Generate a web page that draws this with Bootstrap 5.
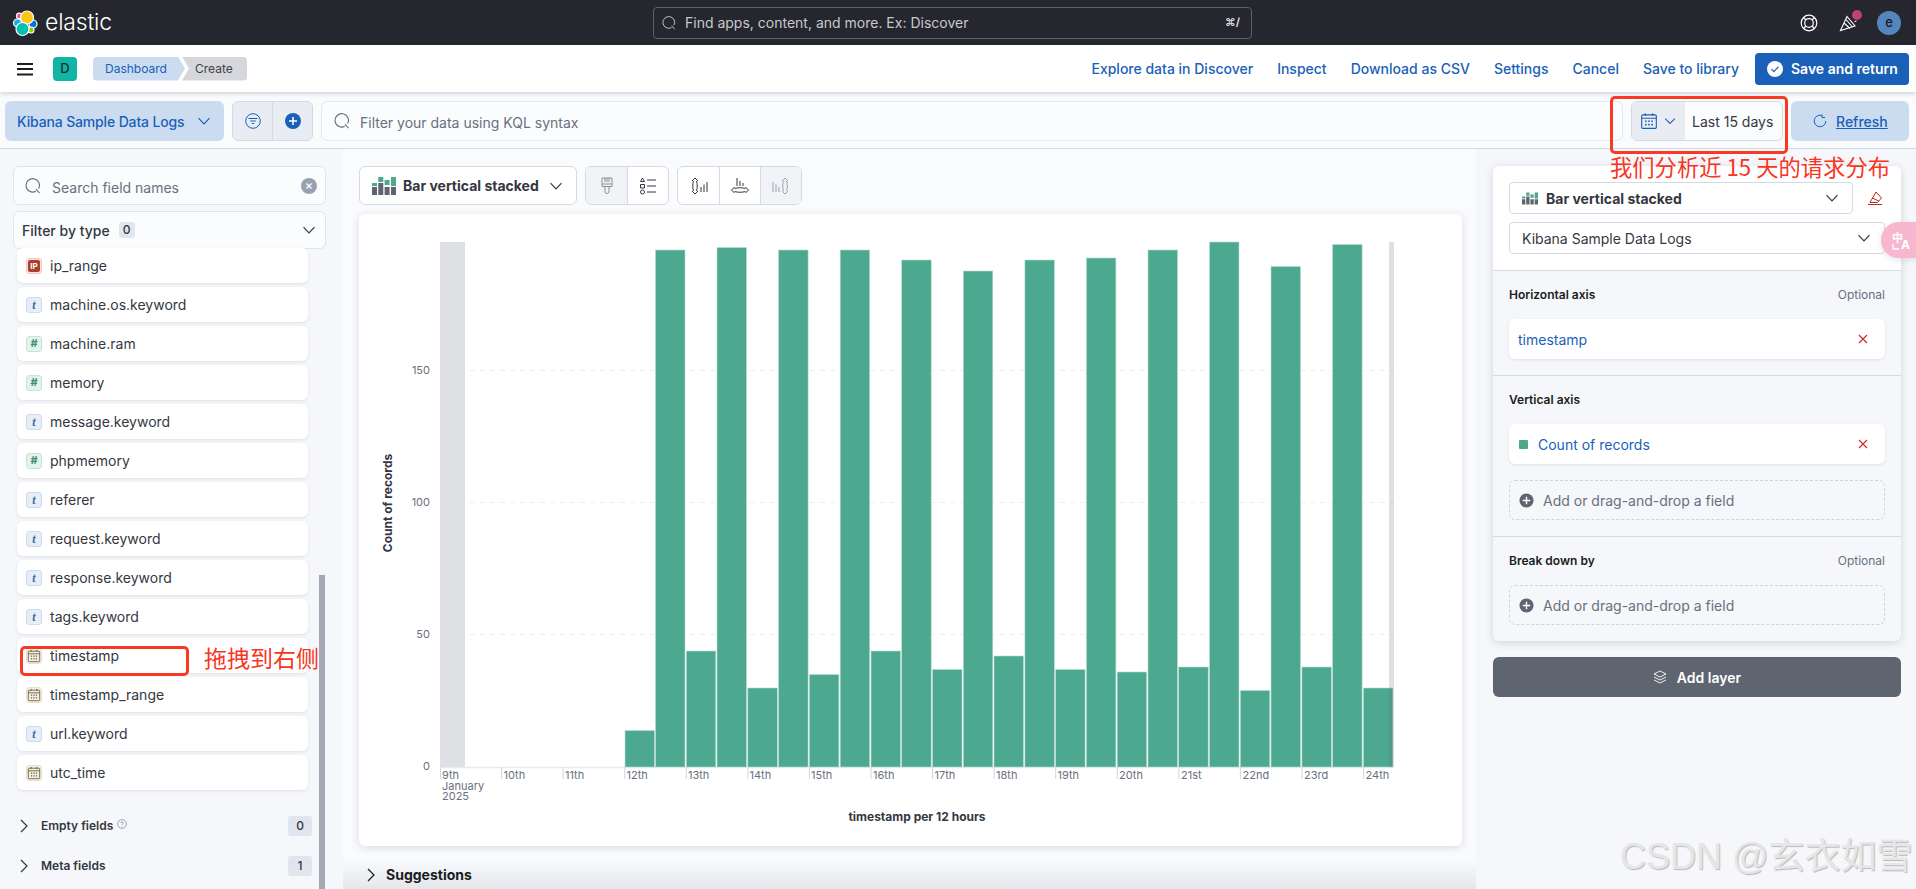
<!DOCTYPE html>
<html lang="en">
<head>
<meta charset="utf-8">
<title>Kibana Lens</title>
<link rel="stylesheet" href="https://cdn.jsdelivr.net/npm/bootstrap@5.3.0/dist/css/bootstrap.min.css">
<style>
html,body{height:889px;overflow:hidden}
body{font-family:Inter,"Noto Sans CJK SC",sans-serif;font-size:14px;color:#343741;background:#fafbfd;position:relative;width:1916px}
svg{display:block;flex:none}
.k-blue{color:#1a5fb8}
.k-top{height:45px;background:#25262e;flex:none}
.k-logo{width:653px;padding-left:12px;color:#fff;gap:5px}
.k-logotext{font-size:23px;font-weight:300;letter-spacing:-.2px;line-height:1}
.k-gsearch{width:599px;height:32px;border:1px solid #5d6068;border-radius:4px;color:#c7c9cd;padding:0 10px 0 8px;font-size:14px;gap:9px}
.k-kbd{font-size:11px;font-weight:700;color:#d5d6d9;margin-right:1px}
.k-topicons{flex:1;padding-right:15px;gap:18px}
.k-buoy{margin-right:3px}
.k-dot{width:10px;height:10px;background:#bd4277;left:13px;top:-3px}
.k-avatar{width:24px;height:24px;border-radius:50%;background:#5585bd;color:#17181d;font-size:13px;font-weight:500}
.k-app{height:47px;background:#fff;box-shadow:0 2px 4px rgba(70,80,110,.22);flex:none;position:relative;z-index:3}
.k-burger{margin-left:17px;margin-right:20px}
.k-dsq{width:24px;height:24px;background:#10b5a5;border-radius:4px;font-size:13px;color:#16312e;font-weight:500;margin-right:16px}
.k-crumb{height:24px;font-size:12px;line-height:24px;border-radius:4px 0 0 4px}
.k-crumb1{background:#cbdcf1;color:#1a5fb8;width:92px;padding-left:12px;clip-path:polygon(0 0,85px 0,92px 50%,85px 100%,0 100%)}
.k-crumb2{background:#d5d7da;color:#3f434c;width:65px;margin-left:-3px;padding-left:13px;border-radius:0 4px 4px 0;clip-path:polygon(0 0,100% 0,100% 100%,0 100%,7px 50%)}
.k-links{margin-left:auto;padding-right:7px;gap:24px}
.k-links a{color:#1a5fb8;font-weight:500;text-decoration:none;font-size:14px}
.k-savebtn{width:154px;height:32px;background:#1a5fb8;color:#fff;border:0;border-radius:4px;font-weight:600;font-size:14px;padding:0 0 0 12px;gap:8px;margin-left:-8px}
.k-filterbar{height:57px;flex:none;border-bottom:1px solid #d3dae6;padding:9px 7px 0 5px;gap:8px;background:#fafbfd;align-items:flex-start}
.k-dview{width:219px;height:40px;background:#cbdcf1;color:#1a5fb8;border:0;border-radius:6px;font-weight:500;font-size:14px;padding:0 12px;justify-content:space-between;letter-spacing:-.15px}
.k-fgroup{width:81px;height:40px;border:1px solid #d3dae6;border-radius:6px;background:#e9edf3;overflow:hidden}
.k-fgroup>div{flex:1;height:100%}
.k-fgroup>div+div{border-left:1px solid #d3dae6}
.k-query{flex:1;height:40px;border:1px solid #e4e8f0;border-radius:6px;background:#fbfcfd;color:#69707d;padding:0 12px;gap:10px}
.k-query span{margin-top:2px}
.k-date{width:152px;height:40px;border:1px solid #d3dae6;border-radius:6px;overflow:hidden;background:#fbfcfd}
.k-datel{width:53px;height:100%;background:#e9edf3;padding-left:8px;gap:5px}
.k-datet{padding-left:7px;color:#343741}
.k-refresh{width:118px;height:40px;background:#cbdcf1;color:#1a5fb8;border-radius:6px;padding-left:22px;gap:9px;font-weight:500}
.k-refresh span{text-decoration:underline}
.k-main{flex:1;min-height:0}
.k-side{width:343px;background:#f5f7fa;padding-top:17px;position:relative;flex:none;overflow:hidden}
.k-field{margin:0 17px 0 13px;width:313px;border:1px solid #dfe4ee;border-radius:6px;background:#fbfcfd;padding:0 8px 0 11px}
.k-fsearch{height:39px;color:#69707d;gap:11px}
.k-fsearch span{margin-top:3px}
.k-ffilter{height:38px;margin-top:6px;gap:9px;font-weight:500;padding-left:8px}
.k-cnt{background:#e0e5ee;border-radius:3px;width:16px;height:16px;font-size:12px;font-weight:500;color:#343741}
.k-list{margin:-1px 0 0 17px;width:291px;gap:4px}
.k-row{height:35px;background:#fff;border-radius:6px;box-shadow:0 1px 3px rgba(70,80,110,.13);padding-left:9px;gap:8px;font-size:14px;color:#343741;flex:none}
.k-ti{width:16px;height:16px;border-radius:3px;border:1px solid;font-size:11px;line-height:1;flex:none}
.k-tt{background:#e6eef8;border-color:#ccdcee;color:#3f6a9f;font-family:"Liberation Serif",serif;font-style:italic;font-weight:700;font-size:12px}
.k-tn{background:#e3f3ee;border-color:#c3e4da;color:#3f8a72;font-weight:700}
.k-td{background:#f5f0e6;border-color:#e8e1d2}
.k-ti-ip{background:#fbe3de;border-color:#f6c6bb}
.k-ipin{background:#a8412f;color:#fff;width:12px;height:12px;font-size:8px;font-weight:700;border-radius:2px}
.k-grp{height:20px;padding:0 31px 0 20px;font-size:12px;font-weight:600;color:#343741}
.k-grp1{margin-top:26px}
.k-grp2{margin-top:20px}
.k-grp .k-name{margin-left:13px}
.k-gb{margin-left:auto;width:24px;height:20px;background:#e0e5ee;border-radius:3px;font-size:12px;font-weight:500}
.k-bar{position:absolute;left:319px;top:426px;bottom:0;width:6px;background:#a5a9b2}
.k-center{flex:1;padding-top:17px;min-width:0}
.k-toolbar{padding:0 0 0 16px;gap:8px;height:39px;flex:none}
.k-type{width:218px;height:39px;border:1px solid #d3dae6;border-radius:6px;background:#fff;font-weight:700;font-size:14px;color:#343741;padding:0 12px;gap:7px}
.k-tgroup{height:39px;border:1px solid #d3dae6;border-radius:6px;background:#fff;overflow:hidden}
.k-tgroup>div{width:41px;height:100%}
.k-tgroup>div+div{border-left:1px solid #d3dae6}
.k-tgroup .k-on{background:#f1f3f7}
.k-chart{margin:9px 14px 0 16px;width:1103px;height:632px;border:0;border-radius:6px;box-shadow:0 2px 8px rgba(70,80,110,.18);flex:none;overflow:hidden}
.k-sugg{flex:1;padding:14px 0 0 24px;font-weight:700;gap:11px;color:#1a1c21;background:linear-gradient(180deg,rgba(225,228,234,0) 30%,#e4e6eb 100%)}
.k-right{width:440px;flex:none;background:#f5f7fa;padding:17px 15px 0 17px}
.k-config{border:0;border-radius:6px;background:#f5f7fa;box-shadow:0 2px 8px rgba(70,80,110,.2);overflow:hidden}
.k-cfgtop{background:#fff;padding:16px 16px;height:104px}
.k-sel{height:32px;border:1px solid #d3dae6;border-radius:4px;background:#fff;padding:0 12px}
.k-sel1{width:344px;font-weight:700;gap:8px}
.k-sel2{margin-top:8px;width:376px;justify-content:space-between;padding:0 12px}
.k-trash{margin-left:14px}
.k-sec{border-top:1px solid #d3dae6;padding:14px 16px 16px}
.k-lab{height:20px;margin-bottom:14px;font-size:12px;font-weight:600;color:#1a1c21;justify-content:space-between}
.k-lab span+span{font-weight:400;color:#69707d}
.k-dim{height:40px;background:#fff;border-radius:6px;box-shadow:0 1px 3px rgba(70,80,110,.13);color:#1a5fb8;padding:0 14px 0 9px}
.k-swatch{width:9px;height:9px;background:#4ca98f;border-radius:1px;margin:0 10px 0 1px}
.k-add{height:40px;border:1px dashed #cdd3e0;border-radius:6px;color:#69707d;padding:0 9px;gap:9px;margin-top:16px}
.k-sec .k-lab+.k-add{margin-top:0}
.k-addlayer{width:408px;height:40px;margin-top:16px;background:#5e6470;color:#fff;border:0;border-radius:6px;font-weight:600;font-size:14px;gap:10px}
.k-note{position:absolute;font-family:"Noto Sans CJK SC",sans-serif;color:#f8351f;line-height:1;white-space:nowrap;z-index:5}
.k-note1{left:1610px;top:155px;font-size:22.3px}
.k-note2{left:204px;top:646px;font-size:23px}
.k-redbox{position:absolute;border:3px solid #f73a24;border-radius:5px;z-index:5}
.k-redbox1{left:1610px;top:96px;width:178px;height:58px}
.k-redbox2{left:20px;top:646px;width:169px;height:30px}
.k-trans{position:absolute;left:1881px;top:222px;width:35px;height:36px;background:#f7b8cf;border-radius:18px 0 0 18px;z-index:6;box-shadow:0 2px 6px rgba(120,60,90,.15)}
.k-mark{position:absolute;left:1620px;top:835px;font-family:"Liberation Sans","Noto Sans CJK SC",sans-serif;font-size:36px;line-height:1.2;color:#e6e6e8;text-shadow:1px 1px 1px #b8b8b8;white-space:nowrap;z-index:5}
.t-y{font-size:11px;fill:#69707d;text-anchor:end}
.t-x{font-size:11px;fill:#69707d}
.t-title{font-size:12px;font-weight:700;fill:#343741;text-anchor:middle}
.k-bars rect{fill:#4ca98f;stroke:#b9ddd2;stroke-width:.6}
</style>
</head>
<body class="d-flex flex-column">
<svg width="0" height="0" style="position:absolute">
<symbol id="i-chev" viewBox="0 0 16 16"><path d="M2.5 5.2 8 10.8l5.5-5.6" fill="none" stroke="currentColor" stroke-width="1.2"/></symbol>
<symbol id="i-chevr" viewBox="0 0 16 16"><path d="M5 2l6 6-6 6" fill="none" stroke="currentColor" stroke-width="1.2"/></symbol>
<symbol id="i-search" viewBox="0 0 16 16"><path d="M10.800 13.300A6.700 6.700 0 1 1 13.600 10.600M10.900 11.100l3.600 4" fill="none" stroke="currentColor" stroke-width="1.1"/></symbol>
<symbol id="i-cal" viewBox="0 0 16 16"><g fill="none" stroke="currentColor"><rect x="1.500" y="2.500" width="13" height="12" rx="1"/><path d="M1.500 5.500h13M4.700 1v2.500M11.300 1v2.500"/></g><path fill="currentColor" d="M4.500 7.500h1.400v1.400H4.500zM7.300 7.500h1.400v1.400H7.300zM10.100 7.500h1.400v1.400h-1.400zM4.500 10.500h1.400v1.400H4.500zM7.300 10.500h1.400v1.400H7.300zM10.100 10.500h1.400v1.400h-1.400z"/></symbol>
<symbol id="i-bars" viewBox="0 0 24 18"><path fill="#4ca98f" d="M0 6h5v3H0zM6.300 0h5v5h-5zM12.600 3h5v5h-5zM19 0h5v9h-5z"/><path fill="#5e6470" d="M0 10h5v8H0zM6.300 6h5v12h-5zM12.600 10h5v8h-5zM19 10h5v8h-5z"/></symbol>
<symbol id="i-x" viewBox="0 0 16 16"><path d="M4 4l8 8M12 4l-8 8" stroke="#c9302c" stroke-width="1.2" fill="none"/></symbol>
<symbol id="i-plus" viewBox="0 0 16 16"><circle cx="8" cy="8" r="7.500" fill="#5e6470"/><path d="M8 4v8M4 8h8" stroke="#fff" stroke-width="1.500"/></symbol>
</svg>

<header class="k-top d-flex align-items-center">
  <div class="k-logo d-flex align-items-center">
    <svg width="28" height="30" viewBox="12 6 28 30"><g stroke="#fff" stroke-width="1.200"><circle cx="19.300" cy="14" r="2.800" fill="#f04e98"/><circle cx="17.500" cy="21" r="4" fill="#1ba9f5"/><circle cx="33" cy="22" r="4" fill="#0077cc"/><circle cx="31" cy="28" r="3" fill="#93c90e"/><circle cx="27" cy="15.500" r="6.500" fill="#fec514"/><circle cx="22.500" cy="27" r="6.500" fill="#00bfb3"/></g></svg>
    <span class="k-logotext">elastic</span>
  </div>
  <div class="k-gsearch d-flex align-items-center">
    <svg width="14" height="14"><use href="#i-search"/></svg>
    <span>Find apps, content, and more. Ex: Discover</span>
    <span class="k-kbd ms-auto">⌘/</span>
  </div>
  <div class="k-topicons d-flex align-items-center justify-content-end">
    <svg class="k-buoy" width="18" height="18" viewBox="0 0 18 18" fill="none" stroke="#fff" stroke-width="1.200"><circle cx="9" cy="9" r="7.800"/><circle cx="9" cy="9" r="4.300"/><path d="M3.500 3.500l2.500 2.500M14.500 3.500 12 6M3.500 14.500 6 12M14.500 14.500 12 12"/></svg>
    <div class="position-relative">
      <svg width="20" height="20" viewBox="0 0 20 20" fill="none" stroke="#fff" stroke-width="1.100"><path d="M1.500 17.500 8 3.500l8 9.500zM5 10l6 5.500M7 6.500l6 7M15.500 8.500l2-.5"/></svg>
      <span class="k-dot position-absolute rounded-circle"></span>
    </div>
    <div class="k-avatar d-flex align-items-center justify-content-center">e</div>
  </div>
</header>

<div class="k-app d-flex align-items-center">
  <svg class="k-burger" width="16" height="14" viewBox="0 0 16 14"><path d="M0 2h16M0 7h16M0 12.500h16" stroke="#1a1c21" stroke-width="2"/></svg>
  <div class="k-dsq d-flex align-items-center justify-content-center">D</div>
  <div class="k-crumb k-crumb1">Dashboard</div>
  <div class="k-crumb k-crumb2">Create</div>
  <nav class="k-links d-flex align-items-center">
    <a href="#">Explore data in Discover</a>
    <a href="#">Inspect</a>
    <a href="#">Download as CSV</a>
    <a href="#">Settings</a>
    <a href="#">Cancel</a>
    <a href="#">Save to library</a>
    <button class="btn k-savebtn d-flex align-items-center" type="button">
      <svg width="16" height="16" viewBox="0 0 16 16"><circle cx="8" cy="8" r="8" fill="#fff"/><path d="M4.500 8.200l2.400 2.400 4.600-5" fill="none" stroke="#1a5fb8" stroke-width="1.200"/></svg>
      <span>Save and return</span>
    </button>
  </nav>
</div>

<div class="k-filterbar d-flex">
  <button class="btn k-dview d-flex align-items-center" type="button">
    <span>Kibana Sample Data Logs</span>
    <svg width="16" height="16"><use href="#i-chev"/></svg>
  </button>
  <div class="k-fgroup d-flex">
    <div class="d-flex align-items-center justify-content-center">
      <svg width="16" height="16" viewBox="0 0 16 16" fill="none" stroke="#1a5fb8"><circle cx="8" cy="8" r="7.300"/><path d="M3.500 5.500h9M5.300 8h5.400M6.800 10.500h2.400"/></svg>
    </div>
    <div class="d-flex align-items-center justify-content-center">
      <svg width="16" height="16" viewBox="0 0 16 16"><circle cx="8" cy="8" r="8" fill="#1a5fb8"/><path d="M8 4v8M4 8h8" stroke="#fff" stroke-width="1.500"/></svg>
    </div>
  </div>
  <div class="k-query d-flex align-items-center">
    <svg width="16" height="16"><use href="#i-search"/></svg>
    <span>Filter your data using KQL syntax</span>
  </div>
  <div class="k-date d-flex align-items-center">
    <div class="k-datel d-flex align-items-center k-blue">
      <svg width="18" height="18"><use href="#i-cal"/></svg>
      <svg width="14" height="14"><use href="#i-chev"/></svg>
    </div>
    <div class="k-datet">Last 15 days</div>
  </div>
  <div class="k-refresh d-flex align-items-center">
    <svg width="14" height="14" viewBox="0 0 14 14" fill="none" stroke="currentColor"><path d="M12.800 7A5.800 5.800 0 1 1 9 1.500M9 .5v3h3"/></svg>
    <span>Refresh</span>
  </div>
</div>

<div class="k-main d-flex">
  <aside class="k-side d-flex flex-column">
    <div class="k-field k-fsearch d-flex align-items-center">
      <svg width="16" height="16"><use href="#i-search"/></svg>
      <span>Search field names</span>
      <svg class="ms-auto" width="16" height="16" viewBox="0 0 16 16"><circle cx="8" cy="8" r="8" fill="#98a2b3"/><path d="M5.500 5.500l5 5M10.500 5.500l-5 5" stroke="#fff" stroke-width="1.400"/></svg>
    </div>
    <div class="k-field k-ffilter d-flex align-items-center">
      <span>Filter by type</span>
      <span class="k-cnt d-flex align-items-center justify-content-center">0</span>
      <svg class="ms-auto" width="16" height="16"><use href="#i-chev"/></svg>
    </div>
    <div class="k-list d-flex flex-column">
      <div class="k-row d-flex align-items-center"><span class="k-ti k-ti-ip d-flex align-items-center justify-content-center"><span class="k-ipin d-flex align-items-center justify-content-center">IP</span></span><span>ip_range</span></div>
      <div class="k-row d-flex align-items-center"><span class="k-ti k-tt d-flex align-items-center justify-content-center">t</span><span>machine.os.keyword</span></div>
      <div class="k-row d-flex align-items-center"><span class="k-ti k-tn d-flex align-items-center justify-content-center">#</span><span>machine.ram</span></div>
      <div class="k-row d-flex align-items-center"><span class="k-ti k-tn d-flex align-items-center justify-content-center">#</span><span>memory</span></div>
      <div class="k-row d-flex align-items-center"><span class="k-ti k-tt d-flex align-items-center justify-content-center">t</span><span>message.keyword</span></div>
      <div class="k-row d-flex align-items-center"><span class="k-ti k-tn d-flex align-items-center justify-content-center">#</span><span>phpmemory</span></div>
      <div class="k-row d-flex align-items-center"><span class="k-ti k-tt d-flex align-items-center justify-content-center">t</span><span>referer</span></div>
      <div class="k-row d-flex align-items-center"><span class="k-ti k-tt d-flex align-items-center justify-content-center">t</span><span>request.keyword</span></div>
      <div class="k-row d-flex align-items-center"><span class="k-ti k-tt d-flex align-items-center justify-content-center">t</span><span>response.keyword</span></div>
      <div class="k-row d-flex align-items-center"><span class="k-ti k-tt d-flex align-items-center justify-content-center">t</span><span>tags.keyword</span></div>
      <div class="k-row d-flex align-items-center"><span class="k-ti k-td d-flex align-items-center justify-content-center"><svg width="14" height="14" color="#6b5e3f"><use href="#i-cal"/></svg></span><span>timestamp</span></div>
      <div class="k-row d-flex align-items-center"><span class="k-ti k-td d-flex align-items-center justify-content-center"><svg width="14" height="14" color="#6b5e3f"><use href="#i-cal"/></svg></span><span>timestamp_range</span></div>
      <div class="k-row d-flex align-items-center"><span class="k-ti k-tt d-flex align-items-center justify-content-center">t</span><span>url.keyword</span></div>
      <div class="k-row d-flex align-items-center"><span class="k-ti k-td d-flex align-items-center justify-content-center"><svg width="14" height="14" color="#6b5e3f"><use href="#i-cal"/></svg></span><span>utc_time</span></div>
    </div>
    <div class="k-grp k-grp1 d-flex align-items-center">
      <svg width="8" height="14" viewBox="4 1 8 14"><use href="#i-chevr" width="16" height="16"/></svg>
      <span class="k-name">Empty fields</span>
      <svg class="ms-1 mb-1" width="10" height="10" viewBox="0 0 10 10" fill="none" stroke="#8a8f99" stroke-width=".8"><circle cx="5" cy="5" r="4.400"/><path d="M3.800 4c0-1.500 2.500-1.500 2.500 0 0 1-1.300 1-1.300 2M5 7v.8"/></svg>
      <span class="k-gb d-flex align-items-center justify-content-center">0</span>
    </div>
    <div class="k-grp k-grp2 d-flex align-items-center">
      <svg width="8" height="14" viewBox="4 1 8 14"><use href="#i-chevr" width="16" height="16"/></svg>
      <span class="k-name">Meta fields</span>
      <span class="k-gb d-flex align-items-center justify-content-center">1</span>
    </div>
    <div class="k-bar"></div>
  </aside>

  <main class="k-center d-flex flex-column">
    <div class="k-toolbar d-flex">
      <div class="k-type d-flex align-items-center">
        <svg width="24" height="18"><use href="#i-bars"/></svg>
        <span>Bar vertical stacked</span>
        <svg class="ms-auto" width="16" height="16"><use href="#i-chev"/></svg>
      </div>
      <div class="k-tgroup d-flex">
        <div class="k-on d-flex align-items-center justify-content-center">
          <svg width="16" height="18" viewBox="0 0 16 18" fill="none" stroke="#8a8f99"><path d="M3 1h10v8.500H3zM3 7h10M6 1v4M8 1v4M10 1v4M6 9.500v5a2 2 0 0 0 4 0v-5"/></svg>
        </div>
        <div class="d-flex align-items-center justify-content-center">
          <svg width="18" height="18" viewBox="0 0 18 18" fill="none" stroke="#343741"><path d="M3.500 1 1.500 4.500h4zM1.500 7.500h4v3.500h-4z"/><circle cx="3.500" cy="15" r="2"/><path d="M8 3h9M8 9h9M8 15h9"/></svg>
        </div>
      </div>
      <div class="k-tgroup d-flex">
        <div class="d-flex align-items-center justify-content-center">
          <svg width="18" height="18" viewBox="0 0 18 18" fill="none" stroke="#343741"><path d="M2 4l3-3 3 3M3.500 4c-1 3-1 7 0 10M6.500 4c1 3 1 7 0 10M2 14l3 3 3-3M11 10v5M14 7.500V15M17 5v10"/></svg>
        </div>
        <div class="d-flex align-items-center justify-content-center">
          <svg width="18" height="18" viewBox="0 0 18 18" fill="none" stroke="#343741"><path d="M3.500 10 .5 13l3 3M3.500 11.500c3.500-1 7.500-1 11 0M3.500 14.500c3.500 1 7.500 1 11 0M14.500 10l3 3-3 3M6 1v8M9 4v5M12 6v3"/></svg>
        </div>
        <div class="k-on d-flex align-items-center justify-content-center">
          <svg width="18" height="18" viewBox="0 0 18 18" fill="none" stroke="#98a2b3"><path d="M10 4l3-3 3 3M11.500 4c-1 3-1 7 0 10M14.500 4c1 3 1 7 0 10M10 14l3 3 3-3M1 5v10M4 7.500V15M7 10v5"/></svg>
        </div>
      </div>
    </div>

    <div class="card k-chart bg-white">
      <svg width="1103" height="632" viewBox="359 214 1103 632">
        <g stroke="#eceef2" stroke-dasharray="5 5"><path d="M440 370.500h954M440 502.500h954M440 634.500h954"/></g>
        <path d="M440 767.500h954" stroke="#e9ebf0" stroke-width="1.500"/>
        <rect x="440" y="242" width="25" height="525" fill="#dfe0e3"/>
        <g class="k-bars">
          <rect x="625" y="730.500" width="29.500" height="36.500"/>
          <rect x="655.500" y="250" width="29.500" height="517"/>
          <rect x="686.300" y="651" width="29.500" height="116"/>
          <rect x="717" y="247.500" width="29.500" height="519.500"/>
          <rect x="747.800" y="688" width="29.500" height="79"/>
          <rect x="778.600" y="250" width="29.500" height="517"/>
          <rect x="809.400" y="674.500" width="29.500" height="92.500"/>
          <rect x="840.200" y="250" width="29.500" height="517"/>
          <rect x="871" y="651" width="29.500" height="116"/>
          <rect x="901.700" y="260" width="29.500" height="507"/>
          <rect x="932.500" y="669.500" width="29.500" height="97.500"/>
          <rect x="963.300" y="271" width="29.500" height="496"/>
          <rect x="994" y="656" width="29.500" height="111"/>
          <rect x="1024.900" y="260" width="29.500" height="507"/>
          <rect x="1055.600" y="669.500" width="29.500" height="97.500"/>
          <rect x="1086.400" y="258" width="29.500" height="509"/>
          <rect x="1117.200" y="672" width="29.500" height="95"/>
          <rect x="1148" y="250" width="29.500" height="517"/>
          <rect x="1178.700" y="667" width="29.500" height="100"/>
          <rect x="1209.500" y="242" width="29.500" height="525"/>
          <rect x="1240.300" y="690.500" width="29.500" height="76.500"/>
          <rect x="1271" y="266.500" width="29.500" height="500.500"/>
          <rect x="1301.900" y="667" width="29.500" height="100"/>
          <rect x="1332.600" y="244.500" width="29.500" height="522.500"/>
          <rect x="1363.400" y="688" width="29.500" height="79"/>
        </g>
        <rect x="1389" y="242" width="5" height="525" fill="#5f6570" opacity=".2"/>
        <g stroke="#d3d6dc"><path d="M440.500 767v12M501.600 767v12M563.100 767v12M624.700 767v12M686.300 767v12M747.900 767v12M809.400 767v12M871 767v12M932.600 767v12M994.100 767v12M1055.700 767v12M1117.300 767v12M1178.900 767v12M1240.400 767v12M1302 767v12M1363.600 767v12"/></g>
        <text class="t-y" x="430" y="374">150</text>
        <text class="t-y" x="430" y="506">100</text>
        <text class="t-y" x="430" y="638">50</text>
        <text class="t-y" x="430" y="770">0</text>
        <text class="t-x"><tspan x="442" y="779">9th</tspan><tspan x="442" y="789.500">January</tspan><tspan x="442" y="799.500">2025</tspan></text>
        <text class="t-x" x="503.500" y="779">10th</text>
        <text class="t-x" x="565" y="779">11th</text>
        <text class="t-x" x="626.500" y="779">12th</text>
        <text class="t-x" x="688" y="779">13th</text>
        <text class="t-x" x="749.500" y="779">14th</text>
        <text class="t-x" x="811" y="779">15th</text>
        <text class="t-x" x="873" y="779">16th</text>
        <text class="t-x" x="934.500" y="779">17th</text>
        <text class="t-x" x="996" y="779">18th</text>
        <text class="t-x" x="1057.500" y="779">19th</text>
        <text class="t-x" x="1119" y="779">20th</text>
        <text class="t-x" x="1181" y="779">21st</text>
        <text class="t-x" x="1242.500" y="779">22nd</text>
        <text class="t-x" x="1304" y="779">23rd</text>
        <text class="t-x" x="1365.500" y="779">24th</text>
        <text class="t-title" x="917" y="821">timestamp per 12 hours</text>
        <text class="t-title" transform="translate(392 503) rotate(-90)">Count of records</text>
      </svg>
    </div>

    <div class="k-sugg d-flex align-items-center">
      <svg width="8" height="14" viewBox="4 1 8 14"><use href="#i-chevr" width="16" height="16"/></svg>
      <span>Suggestions</span>
    </div>
  </main>

  <aside class="k-right">
    <div class="card k-config">
      <div class="k-cfgtop">
        <div class="d-flex align-items-center">
          <div class="k-sel k-sel1 d-flex align-items-center">
            <svg width="16" height="13"><use href="#i-bars"/></svg>
            <span>Bar vertical stacked</span>
            <svg class="ms-auto" width="16" height="16"><use href="#i-chev"/></svg>
          </div>
          <svg class="k-trash" width="16" height="16" viewBox="0 0 16 16" fill="none" stroke="#bd271e"><path d="M1 14.500h14M3 12.500 9 2l5.500 6-4 4.500zM5.500 8l6 3"/></svg>
        </div>
        <div class="k-sel k-sel2 d-flex align-items-center">
          <span>Kibana Sample Data Logs</span>
          <svg width="16" height="16"><use href="#i-chev"/></svg>
        </div>
      </div>
      <div class="k-sec">
        <div class="k-lab d-flex align-items-center"><span>Horizontal axis</span><span>Optional</span></div>
        <div class="k-dim d-flex align-items-center"><span>timestamp</span><svg class="ms-auto" width="16" height="16"><use href="#i-x"/></svg></div>
      </div>
      <div class="k-sec">
        <div class="k-lab d-flex align-items-center"><span>Vertical axis</span></div>
        <div class="k-dim d-flex align-items-center"><span class="k-swatch"></span><span>Count of records</span><svg class="ms-auto" width="16" height="16"><use href="#i-x"/></svg></div>
        <div class="k-add d-flex align-items-center"><svg width="15" height="15"><use href="#i-plus"/></svg><span>Add or drag-and-drop a field</span></div>
      </div>
      <div class="k-sec">
        <div class="k-lab d-flex align-items-center"><span>Break down by</span><span>Optional</span></div>
        <div class="k-add d-flex align-items-center"><svg width="15" height="15"><use href="#i-plus"/></svg><span>Add or drag-and-drop a field</span></div>
      </div>
    </div>
    <button class="btn k-addlayer d-flex align-items-center justify-content-center" type="button">
      <svg width="14" height="14" viewBox="0 0 14 14" fill="none" stroke="#fff" stroke-width=".9"><path d="M7 1l6 3-6 3-6-3zM1 7l6 3 6-3M1 10l6 3 6-3"/></svg>
      <span>Add layer</span>
    </button>
  </aside>
</div>

<div class="k-redbox k-redbox1"></div>
<div class="k-note k-note1">我们分析近 15 天的请求分布</div>
<div class="k-redbox k-redbox2"></div>
<div class="k-note k-note2">拖拽到右侧</div>
<div class="k-trans">
  <svg width="35" height="36" viewBox="0 0 35 36"><text x="11" y="20" font-size="11" fill="#fff" font-family="Noto Sans CJK SC,sans-serif" font-weight="700">中</text><text x="20" y="27" font-size="12" fill="#fff" font-family="Inter,sans-serif" font-weight="700">A</text><path d="M12 22v5h6" fill="none" stroke="#fff" stroke-width="1.300"/></svg>
</div>
<div class="k-mark">CSDN @玄衣如雪</div>
</body>
</html>
